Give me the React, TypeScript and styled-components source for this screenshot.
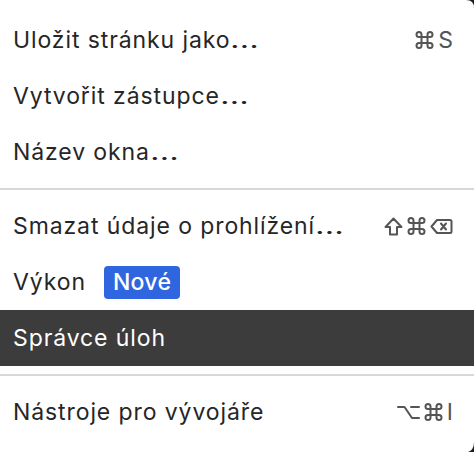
import React from 'react';
import styled, { createGlobalStyle } from 'styled-components';

type Key = 'cmd' | 'shift' | 'opt' | 'del' | string;

type Item = {
  label: string;
  more?: boolean;
  keys?: Key[];
  badge?: string;
  active?: boolean;
};

const groups: Item[][] = [
  [
    { label: 'Uložit stránku jako', more: true, keys: ['cmd', 'S'] },
    { label: 'Vytvořit zástupce', more: true },
    { label: 'Název okna', more: true },
  ],
  [
    { label: 'Smazat údaje o prohlížení', more: true, keys: ['shift', 'cmd', 'del'] },
    { label: 'Výkon', badge: 'Nové' },
    { label: 'Správce úloh', active: true },
  ],
  [{ label: 'Nástroje pro vývojáře', keys: ['opt', 'cmd', 'I'] }],
];

const KeyGlyph = ({ k }: { k: Key }) => {
  switch (k) {
    case 'cmd':
      return (
        <Glyph width="19" height="18" viewBox="0 0 18 18">
          <path d="M6 6V3.5A2.5 2.5 0 1 0 3.5 6H14.5A2.5 2.5 0 1 0 12 3.5V14.5A2.5 2.5 0 1 0 14.5 12H3.5A2.5 2.5 0 1 0 6 14.5Z" />
        </Glyph>
      );
    case 'shift':
      return (
        <Glyph width="19" height="19" viewBox="0 0 19 19">
          <path d="M9.5 1.5L17.5 10H13V17.5H6V10H1.5Z" />
        </Glyph>
      );
    case 'del':
      return (
        <Glyph width="23" height="17" viewBox="0 0 23 17">
          <path d="M1.5 8.5L7 2H20A1.5 1.5 0 0 1 21.5 3.5V13.5A1.5 1.5 0 0 1 20 15H7Z" />
          <path d="M11 5.5L16 11.5M16 5.5L11 11.5" />
        </Glyph>
      );
    case 'opt':
      return (
        <Glyph width="23" height="15" viewBox="0 0 23 15">
          <path d="M1 2H7.5L15 13H22M14 2H22" />
        </Glyph>
      );
    default:
      return <KeyLetter>{k}</KeyLetter>;
  }
};

const App = () => (
  <>
    <GlobalStyle />
    <Menu>
      {groups.map((group, gi) => (
        <React.Fragment key={gi}>
          {gi > 0 && <Separator />}
          {group.map((item) => (
            <Row key={item.label} active={item.active}>
              <Label>
                <span>
                  {item.label}
                  {item.more && <Ellipsis>…</Ellipsis>}
                </span>
                {item.badge && <Badge>{item.badge}</Badge>}
              </Label>
              {item.keys && (
                <Shortcut>
                  {item.keys.map((k) => (
                    <KeyGlyph key={k} k={k} />
                  ))}
                </Shortcut>
              )}
            </Row>
          ))}
        </React.Fragment>
      ))}
      <Corner width="10" height="10" viewBox="0 0 10 10" top>
        <path d="M2 0Q10 0 10 8V0Z" />
      </Corner>
      <Corner width="10" height="14" viewBox="0 0 10 14">
        <path d="M10 4Q10 12 4 14H10Z" />
      </Corner>
    </Menu>
  </>
);

const GlobalStyle = createGlobalStyle`
  html, body {
    margin: 0;
    padding: 0;
    background: #ffffff;
  }
  body {
    font-family: Inter, "Noto Sans", "DejaVu Sans", sans-serif;
  }
`;

const Menu = styled.div`
  position: relative;
  width: 474px;
  height: 452px;
  padding-top: 12px;
  box-sizing: border-box;
  display: flex;
  flex-direction: column;
  background: #ffffff;
  overflow: hidden;
`;

const Row = styled.div.withConfig({
  shouldForwardProp: (prop) => prop !== 'active',
})<{ active?: boolean }>`
  height: 56px;
  flex: none;
  display: flex;
  align-items: center;
  justify-content: space-between;
  padding: 0 21px 0 13px;
  background: ${({ active }) => (active ? '#3c3c3c' : 'transparent')};
  color: ${({ active }) => (active ? '#ffffff' : '#262626')};
`;

const Label = styled.span`
  display: flex;
  align-items: center;
  gap: 18px;
  font-size: 23px;
  letter-spacing: 0.9px;
`;

const Ellipsis = styled.span`
  display: inline-block;
  transform: scaleX(1.45);
  transform-origin: left center;
  margin-right: 8px;
`;

const Badge = styled.span`
  display: inline-flex;
  align-items: center;
  justify-content: center;
  height: 33px;
  padding: 0 9px;
  border-radius: 4px;
  background: #2f66e0;
  color: #ffffff;
  font-size: 23px;
  font-weight: 500;
  letter-spacing: 0.3px;
`;

const Shortcut = styled.span`
  display: flex;
  align-items: center;
  gap: 4px;
  color: #555555;
`;

const Glyph = styled.svg`
  fill: none;
  stroke: currentColor;
  stroke-width: 2;
  stroke-linejoin: round;
  stroke-linecap: round;
  overflow: visible;
`;

const KeyLetter = styled.span`
  font-size: 23px;
  line-height: 1;
  color: #555555;
`;

const Separator = styled.div`
  flex: none;
  height: 18px;
  display: flex;
  align-items: center;
  &::after {
    content: '';
    display: block;
    width: 100%;
    height: 2px;
    background: #d8d8d8;
  }
`;

const Corner = styled.svg.withConfig({
  shouldForwardProp: (prop) => prop !== 'top',
})<{ top?: boolean }>`
  position: absolute;
  right: 0;
  ${({ top }) => (top ? 'top: 0;' : 'bottom: 0;')}
  fill: #1e1e1e;
`;

export default App;
